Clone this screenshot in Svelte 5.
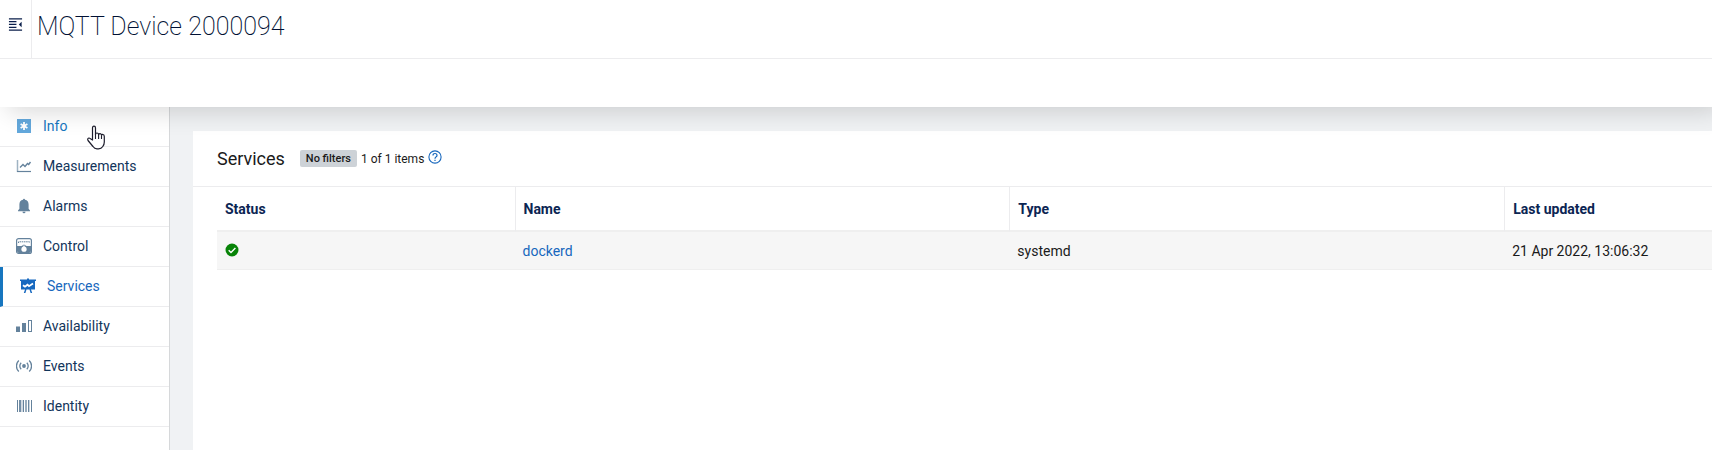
<script>
  const items = [
    { icon: 'info', label: 'Info' },
    { icon: 'chart', label: 'Measurements' },
    { icon: 'bell', label: 'Alarms' },
    { icon: 'control', label: 'Control' },
    { icon: 'services', label: 'Services' },
    { icon: 'bars', label: 'Availability' },
    { icon: 'events', label: 'Events' },
    { icon: 'barcode', label: 'Identity' }
  ];
  const active = 'Services';
  const hovered = 'Info';
  const services = [{ name: 'dockerd', type: 'systemd', updated: '21 Apr 2022, 13:06:32' }];
</script>

{#snippet glyph(name)}
  <svg class="icon" width="16" height="16" viewBox="0 0 16 16" fill="none" stroke="currentColor" aria-hidden="true">
    {#if name === 'info'}
      <rect x="1" y="1" width="14" height="14" fill="#63a8dc" stroke="none" />
      <path d="M8 4v8M4.6 6l6.8 4M11.4 6l-6.8 4" stroke="#fff" stroke-width="1.8" />
    {:else if name === 'chart'}
      <path d="M1.5 2v12" stroke="#9fb3c3" stroke-width="1.5" />
      <path d="M1 13.5h14" stroke-width="1.2" />
      <path d="M4 9.500l3-3 2 2L11.500 5.500l1.200 1L14.500 4" stroke-width="1.400" />
    {:else if name === 'bell'}
      <path d="M7 1.800a1 1 0 0 1 2 0c2.400.5 3.600 2.200 3.600 4.600v4.400l1.400 1.600v.8H2v-.8l1.400-1.600V6.400C3.400 4 4.600 2.300 7 1.800zM6.500 13.800h3a1.500 1.500 0 0 1-3 0z" fill="currentColor" stroke="none" />
    {:else if name === 'control'}
      <rect x="0.6" y="0.6" width="14.8" height="14.8" rx="2" stroke-width="1.2" />
      <path d="M1 8h14v5a2 2 0 0 1-2 2H3a2 2 0 0 1-2-2z" fill="currentColor" stroke="none" />
      <path d="M2.500 5V3.800h11V5" stroke-width="1" stroke-dasharray="1.600 .6" />
      <path d="M5.500 8L8 6.500 10.500 8z" fill="currentColor" stroke="none" />
      <circle cx="8" cy="11.200" r="2.600" fill="#fff" stroke="none" />
      <path d="M8 7.500v2" stroke="#fff" stroke-width="1.300" />
    {:else if name === 'services'}
      <path d="M0 1.500h7V.5h2v1h7V3h-1v8.500h-4l1.200 3.500h-1.600L9.500 11.500h-3L5.400 15H3.800L5 11.500H1V3H0z" fill="currentColor" stroke="none" />
      <path d="M3 7.200l2 1.500 2.500-2L9 8.200l4-2.700" stroke="#fff" stroke-width="1.800" />
    {:else if name === 'bars'}
      <path d="M0 8.500h4v5.500H0zM6 5h4v9H6z" fill="currentColor" stroke="none" />
      <rect x="12.500" y="2.500" width="3" height="11" stroke-width="1" />
    {:else if name === 'events'}
      <circle cx="8" cy="8" r="1.900" fill="currentColor" stroke="none" />
      <path d="M5.200 4.800a4.400 4.400 0 0 0 0 6.400M10.800 4.800a4.400 4.400 0 0 1 0 6.400M2.800 2.500a7.600 7.600 0 0 0 0 11M13.200 2.500a7.600 7.600 0 0 1 0 11" stroke-width="1.300" />
    {:else}
      <path d="M1.500 2v12M15.500 2v12M7.500 2v12" stroke-width="1" />
      <path d="M4 2v12" stroke-width="1.800" />
      <path d="M10 2v12M12.700 2v12" stroke-width="1.300" />
      <path d="M6 2v12" stroke-width=".6" />
    {/if}
  </svg>
{/snippet}

<div class="app">
  <header>
    <div class="title-bar">
      <button class="toggle" aria-label="Toggle navigation">
        <svg width="16" height="16" viewBox="0 0 16 16" fill="none" stroke="currentColor" aria-hidden="true">
          <path d="M1 2.500h14M1 5.500h8M1 8.500h8M1 11.500h8M1 14.500h14" stroke-width="1.300" />
          <path d="M14.500 5.500v6L11.500 8.500z" fill="currentColor" stroke="none" />
        </svg>
      </button>
      <h1>MQTT Device 2000094</h1>
    </div>
    <div class="action-bar"></div>
  </header>
  <div class="body">
    <nav>
      {#each items as item}
        <a href="#{item.icon}" class:active={item.label === active} class:hovered={item.label === hovered}>
          {@render glyph(item.icon)}<span>{item.label}</span>
        </a>
      {/each}
      <svg class="pointer" width="20" height="26" viewBox="0 0 20 26" aria-hidden="true">
        <path d="M6.500 15V3Q6.500 1.200 8 1.200T9.500 3v6.500q0-1.500 1.500-1.500t1.600 1.800q.2-1.300 1.500-1.200 1.300.1 1.400 1.700.3-1 1.500-.8 1.300.2 1.300 2V17q0 2.500-1.500 4.500-1.500 2.300-4.300 2.300h-1.500q-2.500 0-4-2.300L2 15.500q-.9-1.600.3-2.300 1-.6 2.200.6z" fill="#fff" stroke="#1d1d2c" stroke-width="1.200" stroke-linejoin="round" />
        <path d="M9.500 9v5M12.600 9.800V14M15.500 10.500V14" stroke="#1d1d2c" stroke-width="1.100" />
      </svg>
    </nav>
    <main>
      <section class="card">
        <div class="card-head">
          <h2>Services</h2>
          <span class="tag">No filters</span>
          <span class="count">1 of 1 items</span>
          <button class="help" aria-label="Help">
            <svg width="14" height="14" viewBox="0 0 14 14" fill="none" stroke="currentColor" aria-hidden="true">
              <circle cx="7" cy="7" r="6.100" stroke-width="1.100" />
              <path d="M5 5.500Q5 3.500 7 3.500t2 1.900Q9 6.500 7.900 7 7 7.500 7 8.700M7 9.800v1.300" stroke-width="1.200" />
            </svg>
          </button>
        </div>
        <div class="table-wrap">
          <table>
            <colgroup><col class="c-status" /><col class="c-wide" /><col class="c-wide" /><col /></colgroup>
            <thead>
              <tr><th>Status</th><th>Name</th><th>Type</th><th>Last updated</th></tr>
            </thead>
            <tbody>
              {#each services as s}
                <tr>
                  <td>
                    <svg class="ok" width="14" height="14" viewBox="0 0 14 14" role="img" aria-label="Up">
                      <circle cx="7" cy="7" r="6.500" fill="#078307" />
                      <path d="M3.700 7.200L6 9.500l4.400-4.600" fill="none" stroke="#fff" stroke-width="1.400" />
                    </svg>
                  </td>
                  <td><a href="#dockerd">{s.name}</a></td>
                  <td>{s.type}</td>
                  <td>{s.updated}</td>
                </tr>
              {/each}
            </tbody>
          </table>
        </div>
      </section>
    </main>
  </div>
</div>

<style>
  :global(body) { margin: 0; }
  .app {
    min-height: 100vh;
    display: flex;
    flex-direction: column;
    font: 14px/20px Roboto, sans-serif;
    color: #1a1a1a;
    background: #f0f2f4;
    overflow: hidden;
  }
  header {
    position: relative;
    z-index: 1;
    background: #fff;
    box-shadow: 8px 4px 24px rgba(0, 0, 0, 0.16);
  }
  .title-bar {
    display: flex;
    height: 58px;
    border-bottom: 1px solid #ececee;
  }
  button {
    border: 0;
    padding: 0;
    background: none;
    color: inherit;
  }
  svg { display: block; }
  .toggle {
    width: 32px;
    padding: 16px 8px;
    display: flex;
    border-right: 1px solid #ececee;
    color: #0b1f4b;
  }
  h1 {
    margin: 0;
    padding: 11px 5px;
    font-size: 25px;
    line-height: 32px;
    font-weight: 200;
    color: #001033;
  }
  .action-bar { height: 48px; }
  .body { flex: 1; display: flex; }
  nav {
    position: relative;
    flex: 0 0 169px;
    background: #fff;
    border-right: 1px solid #d6d8da;
  }
  nav a {
    display: flex;
    align-items: center;
    gap: 11px;
    height: 37px;
    padding: 0 0 2px 16px;
    border-bottom: 1px solid #ececee;
    color: #12355b;
    text-decoration: none;
  }
  nav .icon { color: #64829c; flex: none; }
  nav a.hovered { color: #1776bf; }
  nav a.active {
    border-left: 3px solid #1776bf;
    padding-left: 17px;
    color: #1767bd;
  }
  nav a.active .icon { color: #1769c0; }
  .pointer {
    position: absolute;
    left: 86px;
    top: 18px;
  }
  main {
    flex: 1;
    min-width: 0;
    padding: 24px 0 0 23px;
    display: flex;
  }
  .card { flex: 1; min-width: 0; background: #fff; }
  .card-head {
    display: flex;
    align-items: center;
    height: 55px;
    padding-left: 24px;
    border-bottom: 1px solid #ececee;
  }
  h2 {
    margin: 0 15px 0 0;
    font-size: 18px;
    line-height: 24px;
    font-weight: 400;
  }
  .tag {
    padding: 0 6px;
    border-radius: 2px;
    background: #cdd2d7;
    font-size: 11px;
    line-height: 17px;
    font-weight: 500;
  }
  .count { margin: 0 4px; font-size: 12px; }
  .help { color: #1767bd; padding-bottom: 4px; }
  .table-wrap { padding-left: 24px; }
  table {
    width: 100%;
    table-layout: fixed;
    border-collapse: separate;
    border-spacing: 0;
  }
  .c-status { width: 19.9%; }
  .c-wide { width: 33.1%; }
  th, td { text-align: left; padding: 0 8px; box-sizing: border-box; }
  th {
    height: 45px;
    border-bottom: 2px solid #efefef;
    font-weight: 700;
    color: #0b2553;
  }
  th + th { border-left: 1px solid #ececee; }
  td {
    height: 38px;
    background: #f6f6f6;
    border-bottom: 1px solid #efefef;
  }
  .ok { margin-bottom: 2px; }
  td a { color: #1767bd; text-decoration: none; }
</style>
